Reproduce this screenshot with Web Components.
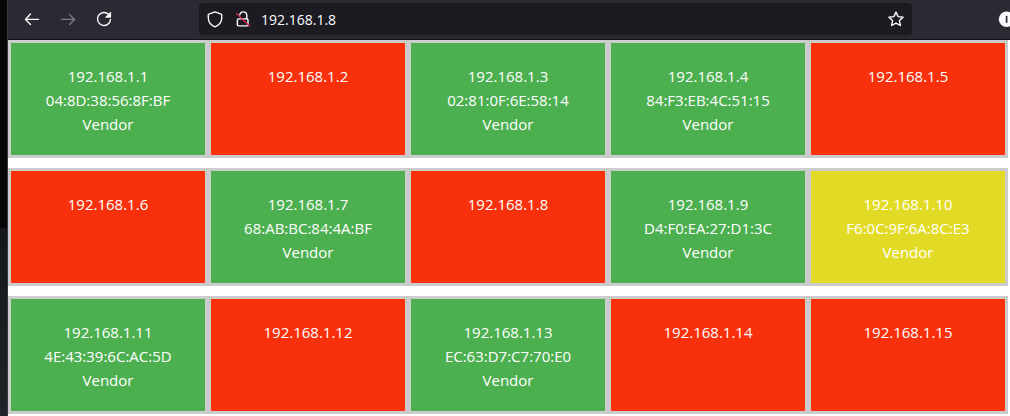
<!DOCTYPE html>
<html lang="en">
<head>
<meta charset="utf-8">
<title>192.168.1.8</title>
<style>
  html { background: #fff; }
  body { margin: 0; min-height: 100vh; overflow-x: hidden; }
</style>
</head>
<body>
<scan-window></scan-window>

<template id="window-template">
  <style>
    :host {
      display: grid;
      grid-template-columns: 8px minmax(0, 1fr);
      min-height: 100vh;
      font-family: "Open Sans", "Noto Sans", sans-serif;
    }
    .desktop {
      box-sizing: border-box;
      border-right: 1px solid #38383c;
      background: linear-gradient(#070707 0 228px, #14171b 228px, #20242a 416px);
    }
  </style>
  <div class="desktop"></div>
  <div>
    <browser-toolbar address="192.168.1.8"></browser-toolbar>
    <host-grid></host-grid>
  </div>
</template>

<template id="toolbar-template">
  <style>
    :host {
      display: grid;
      grid-template-columns: 191px minmax(0, 1fr) 98px;
      box-sizing: border-box;
      height: 40px;
      padding-top: 3px;
      border-bottom: 1px solid #101014;
      background: #2b2a33;
      color: #fbfbfe;
      overflow: hidden;
    }
    nav { display: flex; height: 32px; padding-left: 6px; }
    button {
      display: flex; align-items: center; justify-content: center;
      flex: none; width: 36px; height: 32px; padding: 0; border: 0;
      background: none; color: inherit;
    }
    button:disabled { opacity: 0.4; }
    svg { display: block; width: 16px; height: 16px; flex: none; overflow: visible;
      fill: none; stroke: currentColor; stroke-width: 1.4; stroke-linecap: round; stroke-linejoin: round; }
    .address {
      display: flex; align-items: center;
      height: 32px; border-radius: 4px; background: #1c1b22;
    }
    .address button { width: 32px; }
    .address .lock { width: 24px; }
    input {
      flex: 1; min-width: 0; height: 32px; margin: 0; padding: 0 0 0 6px; border: 0; outline: 0;
      box-sizing: border-box; background: none; color: inherit; font: 14px "Open Sans", "Noto Sans", sans-serif;
    }
    .tools { display: flex; height: 32px; padding-left: 76px; overflow: hidden; }
  </style>
  <nav>
    <button aria-label="Back"><svg viewBox="0 0 16 16"><path d="M1.6 8.4H14.5M6.5 3.1 1.5 8.4l5 5"/></svg></button>
    <button aria-label="Forward" disabled><svg viewBox="0 0 16 16"><path d="M1.5 8.4h13M9.5 3.4l5 5-5 5"/></svg></button>
    <button aria-label="Reload"><svg viewBox="0 0 16 16"><path d="M12.8 3.6A6.5 6.5 0 1 0 14.5 8.5"/><path d="M14.6 1.6v4.6H10z" fill="currentColor" stroke-width="1"/></svg></button>
  </nav>
  <div class="address">
    <button aria-label="Tracking protection"><svg viewBox="0 0 16 16"><path d="M8 .9 14.7 3.4V7c0 4-2.5 7-6.7 8.8C3.8 14 1.3 11 1.3 7V3.4z"/></svg></button>
    <button class="lock" aria-label="Connection is not secure"><svg viewBox="0 0 16 16"><rect x="2.4" y="7.9" width="10.6" height="7" rx="1"/><path d="M4.7 3.8C5.3 1.9 6.6.9 8.1.9c2.2 0 3.7 1.6 3.7 3.7v3.2"/><path d="M1.4 2.4 14.4 15" stroke="#e22850" stroke-width="1.3"/></svg></button>
    <input type="text" aria-label="Address" spellcheck="false">
    <button aria-label="Bookmark this page"><svg viewBox="0 0 16 16"><path d="m8 1.1 2.1 4.5 5 .6-3.7 3.4 1 4.9L8 12.1l-4.4 2.4 1-4.9L.9 6.2l5-.6z"/></svg></button>
  </div>
  <div class="tools">
    <button aria-label="Account"><svg viewBox="0 0 16 16"><circle cx="8.6" cy="8.3" r="7.8" fill="#fbfbfe" stroke="none"/><path d="M8.6 4.8v7" stroke="#2b2a33" stroke-width="1.7" stroke-linecap="butt"/></svg></button>
  </div>
</template>

<template id="grid-template">
  <style>
    :host {
      display: grid;
      grid-template-columns: repeat(5, minmax(0, 1fr));
      row-gap: 10px;
      padding-right: 2px;
      background: #fff;
    }
  </style>
</template>

<template id="card-template">
  <style>
    :host {
      display: block;
      box-sizing: border-box;
      min-height: 118px;
      padding: 21px 16px 19px;
      border: 3px solid #ccc;
      background: #f8310c;
      color: #fff;
      font-size: 15px;
      line-height: 24px;
      text-align: center;
    }
    :host([state="online"]) { background: #4caf50; }
    :host([state="new"]) { background: #e2db26; }
    ::slotted(*) { display: block; }
  </style>
  <slot></slot>
</template>

<script>
  class TemplateElement extends HTMLElement {
    constructor() {
      super();
      const template = document.getElementById(this.constructor.template);
      this.attachShadow({ mode: "open" }).append(template.content.cloneNode(true));
    }
  }

  class HostCard extends TemplateElement {
    static template = "card-template";
  }

  class HostGrid extends TemplateElement {
    static template = "grid-template";
    connectedCallback() {
      const found = {
        1: "04:8D:38:56:8F:BF",
        3: "02:81:0F:6E:58:14",
        4: "84:F3:EB:4C:51:15",
        7: "68:AB:BC:84:4A:BF",
        9: "D4:F0:EA:27:D1:3C",
        10: "F6:0C:9F:6A:8C:E3",
        11: "4E:43:39:6C:AC:5D",
        13: "EC:63:D7:C7:70:E0"
      };
      for (let n = 1; n <= 15; n++) {
        const card = document.createElement("host-card");
        const lines = ["192.168.1." + n];
        if (found[n]) {
          lines.push(found[n], "Vendor");
          card.setAttribute("state", n === 10 ? "new" : "online");
        }
        for (const line of lines) {
          const span = document.createElement("span");
          span.textContent = line;
          card.append(span);
        }
        this.shadowRoot.append(card);
      }
    }
  }

  class BrowserToolbar extends TemplateElement {
    static template = "toolbar-template";
    connectedCallback() {
      this.shadowRoot.querySelector("input").value = this.getAttribute("address");
    }
  }

  class ScanWindow extends TemplateElement {
    static template = "window-template";
  }

  customElements.define("host-card", HostCard);
  customElements.define("host-grid", HostGrid);
  customElements.define("browser-toolbar", BrowserToolbar);
  customElements.define("scan-window", ScanWindow);
</script>
</body>
</html>
